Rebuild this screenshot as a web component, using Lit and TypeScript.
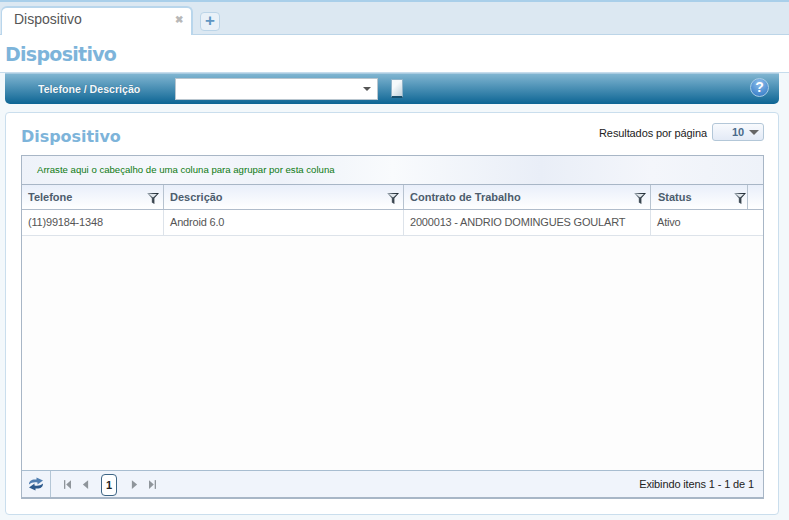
import { LitElement, html, css } from "lit";
import { customElement } from "lit/decorators.js";

const funnel = html`<svg class="funnel" width="12" height="11" viewBox="0 0 12 11"><defs><linearGradient id="fg" x1="0" y1="0" x2="1" y2="0"><stop offset="0" stop-color="#aeb9c2"/><stop offset=".5" stop-color="#3d4852"/><stop offset="1" stop-color="#16222b"/></linearGradient></defs><path d="M0 0h12L7.4 5.2V11L4.8 9.4V5.2Z" fill="url(#fg)"/><path d="M2 1h8L6.5 4.2h-1Z" fill="#dfe5ea"/></svg>`;

const cols = [
  { name: "Telefone", w: 142, value: "(11)99184-1348" },
  { name: "Descrição", w: 240, value: "Android 6.0" },
  { name: "Contrato de Trabalho", w: 247, value: "2000013 - ANDRIO DOMINGUES GOULART" },
  { name: "Status", w: 97, value: "Ativo" },
];

@customElement("app-root")
export class AppRoot extends LitElement {
  static styles = css`
    :host { display: block; width: 789px; height: 520px; overflow: hidden; background: #f3f8fb; font-family: "Liberation Sans", Arial, sans-serif; }
    * { box-sizing: border-box; }
    .tabstrip { height: 35px; background: #dce8f2; border-top: 2px solid #a9cfea; border-bottom: 1px solid #bcd5e8; display: flex; align-items: flex-end; padding-left: 1px; }
    .tab { width: 192px; height: 29px; margin-bottom: -1px; background: #fff; border: 2px solid #b9d6ec; border-bottom: none; border-left-width: 1px; border-radius: 6px 6px 0 0; display: flex; align-items: center; justify-content: space-between; padding: 0 8px 5px 12px; font-size: 14px; color: #555; }
    .close { font-size: 10px; color: #b8b8b8; font-weight: bold; }
    .plus { width: 20px; height: 19px; margin: 0 0 3px 7px; border: 1px solid #bcd5e8; border-radius: 4px; background: #e9f1f8; color: #5f96c3; font-size: 17px; font-weight: bold; line-height: 16px; text-align: center; }
    .title { height: 38px; background: #fff; border-bottom: 1px solid #c6dcec; padding: 8px 0 0 5px; font: bold 19px "DejaVu Sans", Verdana, sans-serif; letter-spacing: -0.72px; color: #7db4da; }
    .toolbar { height: 31px; margin: 0 10px 0 5px; background: linear-gradient(#80b5d1, #0d6594); border-top: 1px solid #a9cbe0; border-radius: 0 0 5px 5px; display: flex; align-items: center; color: #fff; position: relative; }
    .tlabel { width: 170px; padding-left: 33px; margin-top: -1px; font-size: 10.6px; font-weight: bold; color: #f4f8fb; text-shadow: 0 0 1px #245f80; }
    .combo { width: 203px; height: 22px; margin-top: -1px; background: #fff; border: 1px solid #b9c6cf; display: flex; align-items: center; justify-content: flex-end; padding-right: 6px; }
    .arrow { width: 0; height: 0; border: 4px solid transparent; border-top: 4px solid #555; border-bottom: none; }
    .doc { width: 12px; height: 19px; margin-left: 13px; margin-top: -2px; background: linear-gradient(135deg, #f6f9fb 35%, #bfd0da); border: 1px solid #8fb3c9; border-bottom: 2px solid #174f6e; }
    .help { position: absolute; right: 10px; top: 4px; width: 19px; height: 19px; border-radius: 50%; background: radial-gradient(circle at 50% 25%, #8fbfec, #2b74c2); border: 1px solid #a9cde6; color: #fff; font-size: 14px; font-weight: bold; line-height: 17px; text-align: center; }
    .card { height: 403px; margin: 8px 10px 0 5px; background: #fff; border: 1px solid #cadeed; border-radius: 4px; padding: 0 14px 0 15px; }
    .cardhead { height: 42px; display: flex; justify-content: space-between; align-items: flex-start; }
    .cardtitle { padding-top: 14px; font: bold 16px "DejaVu Sans", Verdana, sans-serif; letter-spacing: -0.05px; color: #7db4da; }
    .perpage { display: flex; align-items: center; margin-top: 10px; font-size: 11px; letter-spacing: -0.1px; color: #222; }
    .perpage > span:first-child { margin-top: 2px; }
    .sel { width: 52px; height: 18px; margin-left: 5px; border: 1px solid #b3c7d8; border-radius: 3px; background: linear-gradient(#f8fafd, #e3eaf6); display: flex; align-items: center; justify-content: flex-end; gap: 5px; padding-right: 4px; font-weight: bold; color: #4a6a8a; font-size: 11px; }
    .sel .arrow { border-width: 5px 5px 0; border-top-color: #666; }
    .grid { height: 344px; border: 1px solid #a8b6c6; border-bottom-width: 2px; display: flex; flex-direction: column; background: #fdfdfd; }
    .group { height: 29px; flex: none; border-bottom: 1px solid #a8b6c6; padding: 8px 0 0 15px; font-size: 9.6px; color: #0d7a12; background: linear-gradient(90deg, #eef2f9 0%, #f6f8fc 20%, #eef2f9 35%, #f9fbfd 50%, #e9eef7 70%, #f4f6fb 85%, #eef2f9 100%); }
    .head, .row { display: flex; flex: none; }
    .head { height: 25px; border-bottom: 1px solid #b0bccb; background: linear-gradient(#e9effa, #fff); }
    .row { height: 26px; background: #fff; border-bottom: 1px solid #dde3ea; }
    .hc { display: flex; align-items: center; justify-content: space-between; padding: 0 4px 0 6px; border-right: 1px solid #b7c3d0; font-size: 11px; font-weight: bold; color: #4d5d6d; }
    .hc:nth-child(4) { padding: 0 1px 0 7px; }
    .funnel { flex: none; margin-top: 3px; }
    .c { display: flex; align-items: center; padding: 0 0 2px 6px; border-right: 1px solid #dde3ea; font-size: 11px; letter-spacing: -0.19px; color: #555; white-space: nowrap; }
    .c:last-child { border-right: none; flex: 1; }
    .body { flex: 1; }
    .foot { height: 27px; flex: none; border-top: 1px solid #a8bdd0; background: #f0f4fb; display: flex; align-items: center; padding-right: 9px; font-size: 11px; letter-spacing: -0.13px; color: #222; }
    .refresh { width: 29px; height: 100%; border-right: 1px solid #b4c6d6; display: flex; align-items: center; justify-content: center; }
    .pager { display: flex; align-items: center; margin-left: 13px; gap: 11px; flex: 1; padding-top: 1px; }
    .pbtn { width: 7px; height: 9px; display: block; }
    .cur { width: 16px; height: 22px; border: 1px solid #3d6585; border-radius: 4px; background: #fff; text-align: center; line-height: 20px; font-weight: bold; font-size: 11px; color: #222; margin: 0 3px 0 1px; }
  `;

  render() {
    const grey = "#8f959b";
    return html`
      <div class="tabstrip">
        <div class="tab"><span>Dispositivo</span><span class="close">✖</span></div>
        <div class="plus">+</div>
      </div>
      <div class="title">Dispositivo</div>
      <div class="toolbar">
        <div class="tlabel">Telefone / Descrição</div>
        <div class="combo"><span class="arrow"></span></div>
        <div class="doc"></div>
        <div class="help">?</div>
      </div>
      <div class="card">
        <div class="cardhead">
          <div class="cardtitle">Dispositivo</div>
          <div class="perpage"><span>Resultados por página</span><div class="sel">10 <span class="arrow"></span></div></div>
        </div>
        <div class="grid">
          <div class="group">Arraste aqui o cabeçalho de uma coluna para agrupar por esta coluna</div>
          <div class="head">
            ${cols.map((c) => html`<div class="hc" style="width:${c.w}px">${c.name}${funnel}</div>`)}
          </div>
          <div class="row">
            ${cols.map((c) => html`<div class="c" style="width:${c.w}px">${c.value}</div>`)}
          </div>
          <div class="body"></div>
          <div class="foot">
            <div class="refresh">
              <svg width="14" height="14" viewBox="0 0 14 14"><path d="M0 7.5C0 3.5 3 2 7.5 2.5V0.5L14 3.5 8.5 7.5V5.5C5 5 2.5 5.5 0 7.5Z" fill="#4f7db0"/><path d="M14 6.5c0 4-3 5.5-7.5 5v2L0 10.5 5.5 6.5v2c3.5.5 6 0 8.5-2Z" fill="#2d5a8c"/></svg>
            </div>
            <div class="pager">
              <svg class="pbtn" viewBox="0 0 8 10"><rect x="0" y="0" width="1.5" height="10" fill="${grey}"/><path d="M8 0v10L2.5 5Z" fill="${grey}"/></svg>
              <svg class="pbtn" viewBox="0 0 8 10"><path d="M7 0v10L1 5Z" fill="${grey}"/></svg>
              <div class="cur">1</div>
              <svg class="pbtn" viewBox="0 0 8 10"><path d="M1 0v10L7 5Z" fill="${grey}"/></svg>
              <svg class="pbtn" viewBox="0 0 8 10"><path d="M0 0v10L5.5 5Z" fill="${grey}"/><rect x="6.5" y="0" width="1.5" height="10" fill="${grey}"/></svg>
            </div>
            <div>Exibindo itens 1 - 1 de 1</div>
          </div>
        </div>
      </div>
    `;
  }
}
